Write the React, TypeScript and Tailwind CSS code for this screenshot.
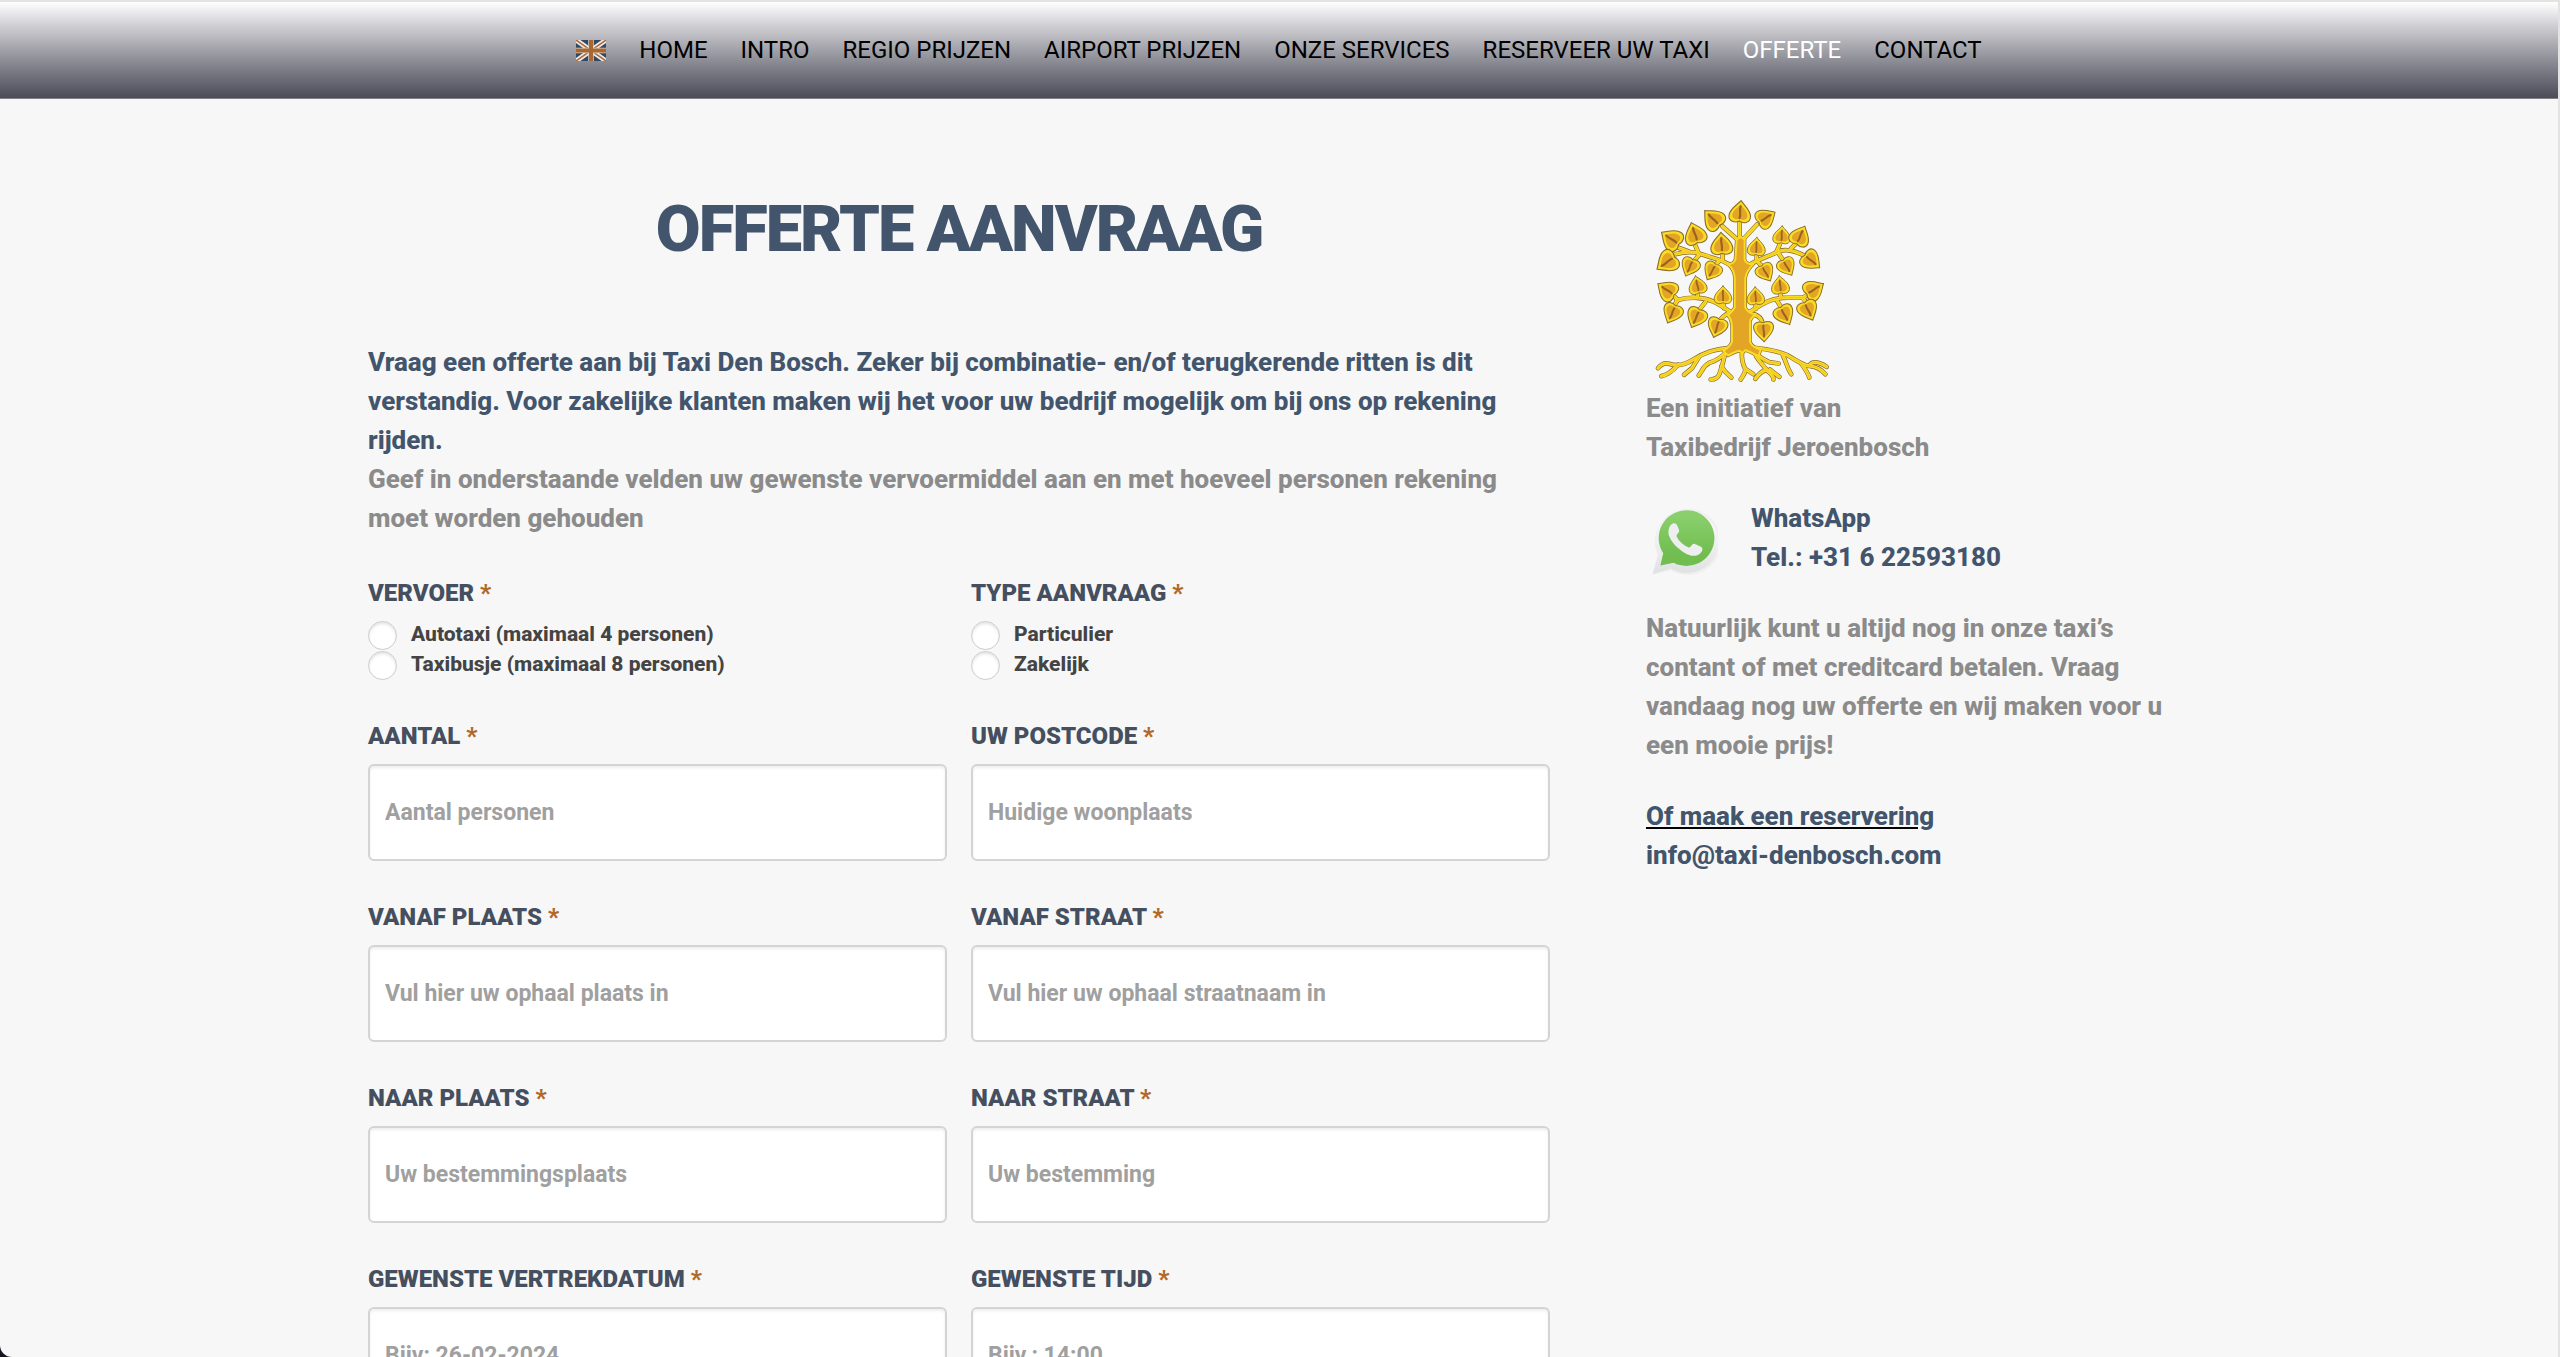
import React from 'react';

interface NavItem {
  label: string;
  active?: boolean;
}

interface TextField {
  id: string;
  label: string;
  placeholder: string;
}

interface RadioField {
  id: string;
  label: string;
  options: string[];
}

const NAV_ITEMS: NavItem[] = [
  { label: 'HOME' },
  { label: 'INTRO' },
  { label: 'REGIO PRIJZEN' },
  { label: 'AIRPORT PRIJZEN' },
  { label: 'ONZE SERVICES' },
  { label: 'RESERVEER UW TAXI' },
  { label: 'OFFERTE', active: true },
  { label: 'CONTACT' },
];

const RADIO_FIELDS: RadioField[] = [
  { id: 'vervoer', label: 'VERVOER', options: ['Autotaxi (maximaal 4 personen)', 'Taxibusje (maximaal 8 personen)'] },
  { id: 'type', label: 'TYPE AANVRAAG', options: ['Particulier', 'Zakelijk'] },
];

const TEXT_FIELDS: TextField[] = [
  { id: 'aantal', label: 'AANTAL', placeholder: 'Aantal personen' },
  { id: 'postcode', label: 'UW POSTCODE', placeholder: 'Huidige woonplaats' },
  { id: 'vanaf-plaats', label: 'VANAF PLAATS', placeholder: 'Vul hier uw ophaal plaats in' },
  { id: 'vanaf-straat', label: 'VANAF STRAAT', placeholder: 'Vul hier uw ophaal straatnaam in' },
  { id: 'naar-plaats', label: 'NAAR PLAATS', placeholder: 'Uw bestemmingsplaats' },
  { id: 'naar-straat', label: 'NAAR STRAAT', placeholder: 'Uw bestemming' },
  { id: 'datum', label: 'GEWENSTE VERTREKDATUM', placeholder: 'Bijv: 26-02-2024' },
  { id: 'tijd', label: 'GEWENSTE TIJD', placeholder: 'Bijv.: 14:00' },
];

// x, y, rotation of the tip, scale
const LEAVES: [number, number, number, number][] = [
  [336, 102, 5, 1.08],
  [258, 121, -45, 1.1],
  [411, 117, 58, 1],
  [202, 167, -18, 1.1],
  [133, 181, -55, 1.1],
  [281, 198, -3, 1.1],
  [120, 246, -125, 1.12],
  [187, 259, -155, 0.94],
  [254, 272, -150, 0.92],
  [385, 206, 3, 0.9],
  [461, 171, 3, 0.88],
  [515, 173, 25, 1.02],
  [547, 241, 130, 1.02],
  [475, 259, 150, 0.92],
  [411, 276, 150, 0.92],
  [120, 334, -55, 1.04],
  [209, 321, -12, 0.9],
  [285, 351, 0, 0.88],
  [383, 354, -3, 0.88],
  [457, 321, -5, 0.9],
  [555, 332, 58, 1.04],
  [134, 398, -155, 1],
  [206, 411, -155, 1.02],
  [268, 440, -162, 1],
  [539, 389, 155, 1.02],
  [468, 403, 152, 1.02],
  [407, 451, 177, 1],
];

const LEAF_PATH = 'M0 -36C8 -25 30 -11 30 8C30 24 12 28 0 21C-12 28 -30 24 -30 8C-30 -11 -8 -25 0 -36Z';

const BRANCHES = [
  'M335 190V125',
  'M328 180L283 140',
  'M345 180L387 135',
  'M330 272C296 244 258 236 212 222C194 216 172 216 142 224',
  'M212 222L198 188',
  'M182 216L150 204',
  'M284 240V222',
  'M212 228L200 242',
  'M272 246L262 256',
  'M342 272C376 242 410 236 452 216C472 207 494 210 532 230',
  'M386 240V224',
  'M446 216L458 188',
  'M488 208L504 192',
  'M452 222L464 240',
  'M392 250L402 260',
  'M325 408C290 390 262 356 206 355C184 354 168 356 146 362',
  'M148 360L134 346',
  'M148 364L138 378',
  'M208 354V340',
  'M232 368L216 388',
  'M288 386L286 368',
  'M308 398C294 404 284 410 276 422',
  'M345 408C384 390 416 356 466 355C490 354 506 354 526 354',
  'M526 354L542 344',
  'M526 358L536 370',
  'M458 354V340',
  'M446 362L460 384',
  'M384 388L382 370',
  'M366 404C386 404 400 414 404 432',
];

const ROOTS = [
  'M312 505C258 508 228 520 196 540C168 558 146 562 120 552C108 550 98 556 90 566',
  'M150 556C136 572 122 586 100 590',
  'M212 534L192 566L168 586',
  'M300 512C280 536 264 544 244 550C224 560 224 574 212 588',
  'M290 528C284 556 280 566 274 584C268 600 256 600 248 600',
  'M280 560C290 578 300 586 310 594',
  'M342 510C340 540 344 552 352 570C352 582 344 590 338 600',
  'M352 568L376 584',
  'M362 508C390 528 404 540 424 548L452 552',
  'M384 530C398 552 414 566 416 572C428 582 438 590 436 600',
  'M416 572C400 574 392 584 382 598',
  'M426 570L454 592',
  'M368 504C420 508 446 514 476 526C512 546 528 560 548 560C566 562 578 568 592 584',
  'M464 526C476 550 478 568 490 584',
  'M520 552C532 570 540 580 544 594',
  'M544 558C552 544 572 546 596 562',
];

const TRUNK_PATH = 'M326 180L322 240C318 250 308 254 300 254C316 268 320 280 320 296V384C314 396 306 400 300 408C310 418 312 428 312 446V486C308 500 298 506 286 514L300 528C312 522 322 516 334 514L344 520L352 512C366 516 378 524 392 530L398 510C382 506 370 498 366 486V430C366 420 372 412 384 404C370 402 356 396 352 384V296C354 280 362 268 376 254C364 254 352 250 350 240V180L338 172Z';

const TreeLogo: React.FC = () => (
  <svg viewBox="78 56 528 554" className="ml-2 h-[185px] w-[176px]" role="img" aria-label="Gouden boom" strokeLinecap="round" strokeLinejoin="round">
    <g fill="none">
      {[...BRANCHES, ...ROOTS].map((d) => (
        <path key={d} d={d} stroke="#8a6c2c" strokeWidth="14" />
      ))}
      <path d={TRUNK_PATH} stroke="#8a6c2c" strokeWidth="10" />
      {[...BRANCHES, ...ROOTS].map((d) => (
        <path key={d} d={d} stroke="#fbdc25" strokeWidth="10" />
      ))}
      {[...BRANCHES, ...ROOTS].map((d) => (
        <path key={d} d={d} stroke="#ecb526" strokeWidth="2" />
      ))}
    </g>
    <path d={TRUNK_PATH} fill="#e2a526" stroke="#fbdc25" strokeWidth="6" />
    {LEAVES.map(([x, y, rotation, scale]) => (
      <g key={`${x}-${y}`} transform={`translate(${x} ${y}) rotate(${rotation}) scale(${scale})`}>
        <path d={LEAF_PATH} fill="#fbdc25" stroke="#8a6c2c" strokeWidth="3" />
        <path d={LEAF_PATH} fill="#e2a526" transform="scale(0.7)" />
        <path d="M0 -20C-3 -8 3 0 0 13" fill="none" stroke="#9a641e" strokeWidth="6" />
      </g>
    ))}
  </svg>
);

const WhatsAppLogo: React.FC = () => (
  <svg viewBox="0 0 72 76" className="mt-1.5 h-[72px] w-[68px]" role="img" aria-label="WhatsApp">
    <defs>
      <linearGradient id="wa-green" x1="0" y1="0" x2="0" y2="1">
        <stop offset="0.1" stopColor="#89d06c" />
        <stop offset="0.8" stopColor="#71bd50" />
      </linearGradient>
      <linearGradient id="wa-rim" x1="0" y1="0" x2="0" y2="1">
        <stop offset="0" stopColor="#ffffff" />
        <stop offset="1" stopColor="#dfe1e2" />
      </linearGradient>
    </defs>
    <path d="M2 74L8 53A35 35 0 1 1 22 69Z" fill="#efefef" />
    <path d="M3 73L9 52A33 33 0 1 1 22 67Z" fill="url(#wa-rim)" />
    <path d="M11 64L14 51A29.500 29.500 0 1 1 25 61Z" fill="url(#wa-green)" />
    <path d="M22 21C25 18 28 19 29 22L31 27C31 29 28 31 28 33C31 39 36 43 41 45C43 45 45 40 47 41L54 44C57 46 55 50 52 52C46 56 38 52 33 48C27 44 22 38 20 32C19 28 20 23 22 21Z" fill="#eeeef0" />
  </svg>
);

const UkFlag: React.FC = () => (
  <svg viewBox="0 0 60 42" className="h-[21px] w-[30px]" role="img" aria-label="English">
    <path fill="#364760" d="M0 0H60V42H0Z" />
    <path d="M0 0L60 42M60 0L0 42" stroke="#ececec" strokeWidth="10" />
    <path d="M0 0L60 42M60 0L0 42" stroke="#b06a3a" strokeWidth="3" />
    <path d="M30 0V42M0 21H60" stroke="#d8d4d0" strokeWidth="11" />
    <path d="M30 0V42M0 21H60" stroke="#a8682f" strokeWidth="8" />
  </svg>
);

const Required: React.FC = () => <span className="text-[#b0692b]">*</span>;

const App: React.FC = () => {
  return (
    <div className="h-screen bg-[#15151f] font-[Roboto,sans-serif]">
      <div className="h-full overflow-y-auto rounded-bl-[12px] border-r-2 border-[#e3e3e3] bg-[#f7f7f7] [scrollbar-width:none]">
        <header className="border-t-2 border-[#e3e3e3]">
          <nav className="flex h-[97px] items-center justify-center gap-[33px] border-b border-[#7f7f88] bg-linear-to-b from-white to-[#4c4c59] text-[24px]">
            <a href="#en"><UkFlag /></a>
            {NAV_ITEMS.map((item) => (
              <a key={item.label} href="#" className={item.active ? 'text-white' : 'text-black'}>{item.label}</a>
            ))}
          </nav>
        </header>

        <div className="mx-auto grid max-w-[1822px] grid-cols-[1182fr_544fr] gap-x-24 pt-[92px] text-[26px] leading-[39px] font-extrabold text-[#8b8b8b]">
          <main>
            <h1 className="text-center text-[65px] leading-[76px] font-black tracking-[-2px] text-[#42556c]">OFFERTE AANVRAAG</h1>
            <p className="pt-[76px] text-[#42556c]">
              Vraag een offerte aan bij Taxi Den Bosch. Zeker bij combinatie- en/of terugkerende ritten is dit verstandig. Voor zakelijke klanten maken wij het voor uw bedrijf mogelijk om bij ons op rekening rijden.
            </p>
            <p>Geef in onderstaande velden uw gewenste vervoermiddel aan en met hoeveel personen rekening moet worden gehouden</p>

            <form className="grid grid-cols-2 gap-x-6 pt-[37px]">
              {RADIO_FIELDS.map((field) => (
                <fieldset key={field.id} className="pb-[37px]">
                  <legend className="pb-[10px] text-[24px] leading-[36px] font-black text-[#454f60]">{field.label} <Required /></legend>
                  {field.options.map((option) => (
                    <label key={option} className="flex h-[30px] items-start gap-[14px] text-[21px] leading-[26px] text-[#444444]">
                      <input type="radio" name={field.id} className="size-[29px] appearance-none rounded-full border border-[#cccccc] bg-white shadow-[inset_0_2px_3px_#e4e4e4] checked:bg-[#42556c]" />
                      {option}
                    </label>
                  ))}
                </fieldset>
              ))}
              {TEXT_FIELDS.map((field) => (
                <div key={field.id} className="flex flex-col gap-[10px] pb-[38px]">
                  <label htmlFor={field.id} className="text-[24px] leading-[36px] font-black text-[#454f60]">{field.label} <Required /></label>
                  <input
                    id={field.id}
                    type="text"
                    placeholder={field.placeholder}
                    className="h-[97px] w-full rounded-md border-2 border-[#d4d4d4] bg-white px-[15px] text-[23px] font-bold text-[#444444] shadow-[inset_0_2px_3px_#eeeeee] placeholder:text-[#a0a0a0]"
                  />
                </div>
              ))}
            </form>
          </main>

          <aside className="pt-[7px]">
            <TreeLogo />
            <p className="pt-[6px]">Een initiatief van<br />Taxibedrijf Jeroenbosch</p>
            <div className="flex gap-[33px] py-8 pl-1 text-[#42556c]">
              <WhatsAppLogo />
              <p>WhatsApp<br />Tel.: +31 6 22593180</p>
            </div>
            <p>Natuurlijk kunt u altijd nog in onze taxi’s contant of met creditcard betalen. Vraag vandaag nog uw offerte en wij maken voor u een mooie prijs!</p>
            <p className="pt-8 text-[#42556c]">
              <a href="#reserveren" className="underline decoration-black">Of maak een reservering</a><br />
              <a href="mailto:info@taxi-denbosch.com">info@taxi-denbosch.com</a>
            </p>
          </aside>
        </div>
      </div>
    </div>
  );
};

export default App;
